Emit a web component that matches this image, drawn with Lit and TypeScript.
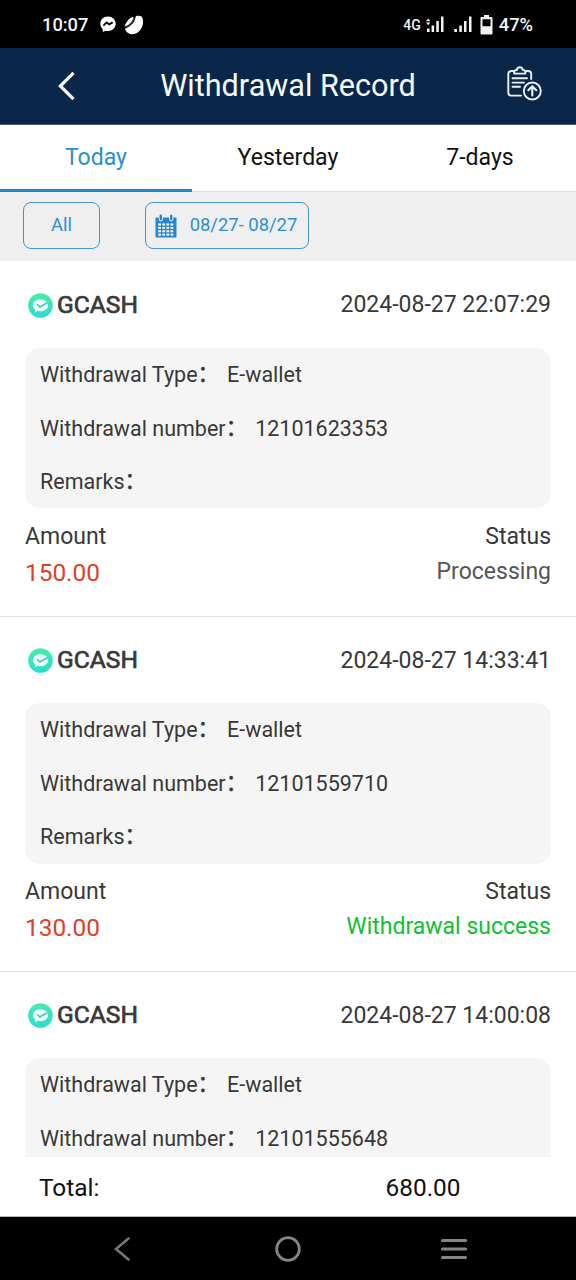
import { LitElement, html, css, svg, nothing } from "lit";
import { customElement, property } from "lit/decorators.js";

interface WithdrawalRecord {
  time: string;
  number: string;
  summary?: { amount: string; status: string; success: boolean };
}

const RECORDS: WithdrawalRecord[] = [
  { time: "2024-08-27 22:07:29", number: "12101623353", summary: { amount: "150.00", status: "Processing", success: false } },
  { time: "2024-08-27 14:33:41", number: "12101559710", summary: { amount: "130.00", status: "Withdrawal success", success: true } },
  { time: "2024-08-27 14:00:08", number: "12101555648" },
];

@customElement("record-item")
class RecordItem extends LitElement {
  @property({ attribute: false }) record!: WithdrawalRecord;

  static styles = css`
    :host {
      display: block;
      flex: none;
      box-sizing: border-box;
      height: 355.2px;
      padding: 0 25px;
      box-shadow: 0 1px 0 #e2e2e2;
      color: #383838;
    }
    .head {
      display: flex;
      align-items: center;
      justify-content: space-between;
      height: 87px;
      font-size: 23px;
    }
    .brand {
      display: flex;
      align-items: center;
      gap: 4px;
      padding-left: 3px;
      font-size: 24.6px;
      -webkit-text-stroke: 0.7px #383838;
    }
    .logo {
      display: block;
      width: 25px;
      height: 25px;
      margin-top: 1px;
    }
    .time {
      padding-top: 0.8px;
    }
    .box {
      background: #f5f5f5;
      border-radius: 15px;
      padding: 0 15px;
      height: 160.4px;
      font-size: 21.5px;
    }
    .line {
      display: flex;
      gap: 8px;
      height: 53.6px;
      line-height: 53px;
      white-space: nowrap;
    }
    .colon {
      line-height: 0;
      vertical-align: 1px;
      -webkit-text-stroke: 0.4px #383838;
    }
    .foot {
      display: flex;
      justify-content: space-between;
      padding-top: 11.6px;
      font-size: 23px;
      line-height: 34.6px;
    }
    .right {
      text-align: right;
    }
    .amount {
      font-size: 24.4px;
      line-height: 35.6px;
      color: #dc4128;
    }
    .state {
      line-height: 34px;
    }
    .pending {
      color: #555;
    }
    .success {
      color: #12bf32;
    }
  `;

  private label(text: string) {
    return html`<span>${text}<span class="colon">：</span></span>`;
  }

  render() {
    const { time, number, summary } = this.record;
    return html`
      <div class="head">
        <div class="brand">
          <svg class="logo" viewBox="0 0 25 25">
            <defs>
              <linearGradient id="g" x1="0" y1="0" x2="0" y2="1">
                <stop offset="0" stop-color="#48eca8" />
                <stop offset="1" stop-color="#2bdcd0" />
              </linearGradient>
            </defs>
            <circle cx="12.5" cy="12.5" r="12.3" fill="url(#g)" />
            <path d="M12.500 6.200c4.300 0 7.600 2.500 7.600 6s-3.300 6-7.600 6c-1 0-1.900-.1-2.800-.4L7 19.600l.2-3.100C5.700 15.400 4.900 13.900 4.900 12.200c0-3.500 3.300-6 7.600-6z" fill="#effffb" />
            <path d="M9 11.200l2.900 2.800 7.600-4.400" fill="none" stroke="#3cc7a9" stroke-width="1.500" />
          </svg>
          <span>GCASH</span>
        </div>
        <span class="time">${time}</span>
      </div>
      <div class="box">
        <div class="line">${this.label("Withdrawal Type")}<span>E-wallet</span></div>
        <div class="line">${this.label("Withdrawal number")}<span>${number}</span></div>
        ${summary ? html`<div class="line">${this.label("Remarks")}</div>` : nothing}
      </div>
      ${summary
        ? html`<div class="foot">
            <div>
              <div>Amount</div>
              <div class="amount">${summary.amount}</div>
            </div>
            <div class="right">
              <div>Status</div>
              <div class="state ${summary.success ? "success" : "pending"}">${summary.status}</div>
            </div>
          </div>`
        : nothing}
    `;
  }
}

@customElement("app-root")
class AppRoot extends LitElement {
  static styles = css`
    :host {
      display: flex;
      flex-direction: column;
      width: 576px;
      height: 1280px;
      overflow: hidden;
      background: #fff;
      font-family: Roboto, "Noto Sans CJK SC", sans-serif;
    }
    svg {
      display: block;
      flex: none;
    }
    .statusbar {
      flex: none;
      display: flex;
      align-items: center;
      height: 48px;
      box-sizing: border-box;
      padding: 1px 43px 0 42px;
      background: #000;
      color: #f4f4f4;
      font-weight: 500;
      font-size: 18.3px;
    }
    .clock {
      width: 58px;
    }
    .spacer {
      flex: 1;
    }
    .net {
      font-size: 14px;
      margin-right: 5px;
    }
    .sig1 {
      margin-right: 10px;
    }
    .sig2 {
      margin-right: 8px;
    }
    .battery {
      margin-right: 6px;
    }
    .header {
      flex: none;
      display: grid;
      grid-template-columns: 130px 1fr 130px;
      align-items: center;
      height: 77px;
      box-sizing: border-box;
      border-bottom: 1px solid #4a5a70;
      background: #0a2648;
      color: #f5fbff;
    }
    .title {
      text-align: center;
      font-size: 30.6px;
      line-height: 40px;
      white-space: nowrap;
    }
    .back {
      margin-left: 57px;
      margin-bottom: 1px;
    }
    .clip {
      margin-left: 60px;
      margin-bottom: 4px;
    }
    .tabs {
      flex: none;
      display: grid;
      grid-template-columns: repeat(3, 1fr);
      height: 67px;
      font-size: 23.04px;
      color: #111;
      text-align: center;
      line-height: 66px;
    }
    .tab {
      box-sizing: border-box;
      height: 67px;
      border-bottom: 1px solid #dedede;
    }
    .active {
      color: #2a8fd3;
      border-bottom: 3px solid #2587cb;
    }
    .filters {
      flex: none;
      display: flex;
      gap: 45px;
      height: 69px;
      box-sizing: border-box;
      padding: 10px 23px;
      background: #efefef;
      color: #2a8fd8;
      font-size: 18.43px;
    }
    .pill {
      box-sizing: border-box;
      height: 47px;
      border: 1px solid #4396d0;
      border-radius: 8px;
      display: flex;
      align-items: center;
      justify-content: center;
      padding-bottom: 2px;
      white-space: nowrap;
    }
    .all {
      width: 77px;
    }
    .range {
      width: 164px;
      gap: 13px;
      padding-right: 2px;
    }
    .calendar {
      margin-top: 2px;
    }
    .list {
      flex: 1;
      min-height: 0;
      overflow: hidden;
      display: flex;
      flex-direction: column;
    }
    .total {
      flex: none;
      display: flex;
      justify-content: space-between;
      height: 60px;
      box-sizing: border-box;
      padding: 0 115.5px 0 39px;
      border-bottom: 1px solid #bbb;
      font-size: 24.4px;
      line-height: 61px;
      color: #111;
    }
    .nav {
      flex: none;
      height: 63px;
      background: #000;
      display: flex;
      align-items: center;
      padding: 0 108px 0 113px;
    }
    .nav-home {
      margin-left: 143px;
      margin-right: 138px;
    }
  `;

  render() {
    const dots = [0, 1, 2, 3].flatMap((row) =>
      [0, 1, 2, 3].map((col) => svg`<rect x=${3.2 + col * 4.1} y=${9.4 + row * 3.4} width="2.800" height="2.100" fill="#f4f8fc" />`)
    );
    return html`
      <div class="statusbar">
        <span class="clock">10:07</span>
        <svg width="16" height="17" viewBox="0 0 16 17">
          <path d="M8 .5C3.500.5.3 3.700.3 7.800c0 2.200.9 4.100 2.500 5.400v2.900l2.700-1.400c.8.200 1.600.3 2.500.3 4.500 0 7.700-3.200 7.700-7.200S12.500.5 8 .5z" fill="#fff" />
          <path d="M3.400 9.700l3.200-3.300 2.700 2 3.300-2" fill="none" stroke="#000" stroke-width="1.900" />
        </svg>
        <svg width="30" height="20" viewBox="-9 0 30 20">
          <path d="M2.200 6.500C4 3.500 6.500 2 9 1.800 11 .8 14.500 0 16.500 1.500c2.300 2.500 2 8.500-.5 12.500-2.600 4.200-7.500 6-11 5C1.500 17.800-.2 15.200-.3 12.300-.2 10 .9 8.200 2.200 6.500z" fill="#fff" />
          <path d="M10 -.5C9.600 3.500 8.800 6 6.800 8.200 5 10.200 2.500 11.800-1 13" fill="none" stroke="#000" stroke-width="1.900" />
          <path d="M9.200 2.500C8.800 4.500 8 6.500 6.300 8.300 4.600 10 2.700 11.200.6 12" fill="none" stroke="#999" stroke-width=".5" />
        </svg>
        <span class="spacer"></span>
        <span class="net">4G</span>
        <svg class="sig1" width="18" height="17" viewBox="0 0 18 17" fill="#f4f4f4">
          <path d="M0 5.200l2.200-2.700 2.200 2.700zM0 6.500h4.400L2.200 9.200zM1 12.500h2.600V16H1zM5.600 9.500h2.500V16H5.600zM10.300 5h2.500v11h-2.500zM15 .5h2.500V16H15z" />
        </svg>
        <svg class="sig2" width="18" height="17" viewBox="0 0 18 17" fill="#f4f4f4">
          <path d="M.3 13h2.600v3H.3zM5.300 9.500h2.500V16H5.300zM10 5h2.500v11H10zM15 .5h2.500V16H15z" />
        </svg>
        <svg class="battery" width="13" height="20" viewBox="0 0 13 20">
          <path d="M4 0h5v2h2.500Q12.500 2 12.500 3v15.500q0 1-1 1h-10q-1 0-1-1V3q0-1 1-1H4zM2.500 4.200v7h8v-7z" fill="#f4f4f4" fill-rule="evenodd" />
        </svg>
        <span>47%</span>
      </div>
      <div class="header">
        <svg class="back" width="20" height="30" viewBox="0 0 20 30">
          <path d="M16.500 1.800L3.300 15l13.200 13.200" fill="none" stroke="#f8fcff" stroke-width="3.200" />
        </svg>
        <div class="title">Withdrawal Record</div>
        <svg class="clip" width="36" height="36" viewBox="0 0 36 36" fill="none" stroke="#e9f3fc" stroke-width="1.900" stroke-linecap="round" stroke-linejoin="round">
          <path d="M8 5H5.500Q2.300 5 2.300 8.200v18.200q0 3.200 3.200 3.200H15M19.500 5H22q3.200 0 3.200 3.200V13" />
          <path d="M8.200 7.600V5.800q0-1.600 2.600-1.800Q11.200 1.200 13.800 1.200T16.800 4q2.600.2 2.600 1.800v1.800z" />
          <path d="M6.500 12.300h14.500M6.500 16.600h11.500M6.500 20.800h7.500" />
          <circle cx="26.300" cy="25" r="8.500" />
          <path d="M26.300 29.500v-9M22.300 24.200l4-4 4 4" stroke-width="2.100" />
        </svg>
      </div>
      <div class="tabs">
        <div class="tab active">Today</div>
        <div class="tab">Yesterday</div>
        <div class="tab">7-days</div>
      </div>
      <div class="filters">
        <div class="pill all">All</div>
        <div class="pill range">
          <svg class="calendar" width="22" height="24" viewBox="0 0 22 24">
            <path d="M1 3.500h20q.5 0 .5.500v18.500q0 1-1 1h-19q-1 0-1-1V4q0-.5.5-.5z" fill="#2585d0" />
            <path d="M5.800.8v4.500M16.200.8v4.500" stroke="#efefef" stroke-width="4.200" stroke-linecap="round" />
            <path d="M5.800 1.600v3.400M16.200 1.600v3.400" stroke="#2585d0" stroke-width="2.400" stroke-linecap="round" />
            ${dots}
          </svg>
          <span>08/27- 08/27</span>
        </div>
      </div>
      <div class="list">${RECORDS.map((r) => html`<record-item .record=${r}></record-item>`)}</div>
      <div class="total"><span>Total:</span><span>680.00</span></div>
      <div class="nav">
        <svg width="18" height="26" viewBox="0 0 18 26">
          <path d="M15.500 2.500L3 13 15.500 23.500" fill="none" stroke="#777" stroke-width="2.600" stroke-linecap="round" />
        </svg>
        <svg class="nav-home" width="28" height="28" viewBox="0 0 28 28">
          <circle cx="14" cy="14" r="11.300" fill="none" stroke="#858585" stroke-width="2.800" />
        </svg>
        <svg width="28" height="24" viewBox="0 0 28 24">
          <path d="M2.400 3.500h23.200M2.400 12h23.200M2.400 20.500h23.200" stroke="#858585" stroke-width="3" stroke-linecap="round" />
        </svg>
      </div>
    `;
  }
}
